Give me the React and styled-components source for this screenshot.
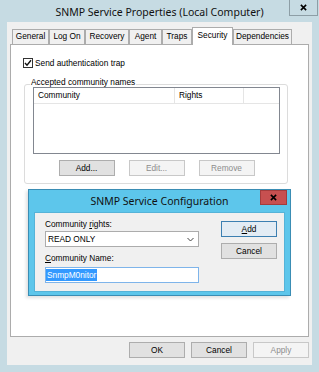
import React from "react";
import styled, { createGlobalStyle } from "styled-components";

const GlobalStyle = createGlobalStyle`
  html, body {
    margin: 0;
    padding: 0;
  }
  body {
    background: #c6dbe3;
    font-family: "Liberation Sans", Arial, sans-serif;
    font-size: 8.3px;
    color: #000;
  }
  * {
    box-sizing: border-box;
  }
`;

const Window = styled.div`
  position: relative;
  width: 319px;
  height: 372px;
  background: #c6dbe3;
  display: flex;
  flex-direction: column;
  overflow: hidden;
`;

const TitleBar = styled.div`
  height: ${(p) => p.h}px;
  flex: none;
  display: grid;
  grid-template-columns: 1fr auto 1fr;
  align-items: start;
`;

const Title = styled.div`
  grid-column: 2;
  font-family: "Noto Sans", "Open Sans", sans-serif;
  font-size: 10.5px;
  line-height: ${(p) => p.lh}px;
  color: #111;
  white-space: nowrap;
`;

const CloseBox = styled.div`
  grid-column: 3;
  justify-self: end;
  width: ${(p) => p.w}px;
  height: ${(p) => p.h}px;
  margin-right: ${(p) => p.mr}px;
  display: flex;
  align-items: center;
  justify-content: center;
  background: ${(p) => (p.red ? "#c75050" : "#c6dbe3")};
  border: 1px solid ${(p) => (p.red ? "#a43c3c" : "#8d9ea6")};
  border-top: ${(p) => (p.red ? "1px solid #a43c3c" : "none")};
`;

const Client = styled.div`
  flex: 1;
  margin: 0 7px 7px;
  padding: 0 3px;
  background: #f0f0f0;
  display: flex;
  flex-direction: column;
`;

const TabStrip = styled.div`
  margin-top: 5px;
  height: 17px;
  padding-left: 2px;
  display: flex;
  align-items: flex-start;
`;

const Tab = styled.div`
  width: ${(p) => p.w}px;
  height: ${(p) => (p.active ? 18 : 15)}px;
  margin-top: ${(p) => (p.active ? 0 : 2)}px;
  border: 1px solid #acacac;
  border-bottom: none;
  background: ${(p) => (p.active ? "#fff" : "#f0f0f0")};
  position: relative;
  z-index: ${(p) => (p.active ? 1 : 0)};
  text-align: center;
  line-height: ${(p) => (p.active ? 15 : 13)}px;
  white-space: nowrap;
`;

const TabPage = styled.div`
  height: 293px;
  flex: none;
  background: #fff;
  border: 1px solid #acacac;
  padding: 13px 20px 0 12px;
`;

const CheckRow = styled.div`
  display: flex;
  align-items: center;
  gap: 2px;
  height: 10px;
`;

const CheckBox = styled.div`
  width: 10px;
  height: 10px;
  border: 1px solid #333;
  background: #fff;
  display: flex;
  align-items: center;
  justify-content: center;
`;

const GroupBox = styled.div`
  position: relative;
  margin: 16px 0 0 1px;
  border: 1px solid #dcdcdc;
  border-radius: 3px;
  padding: 2px 7px 7px 8px;
`;

const GroupLabel = styled.span`
  position: absolute;
  top: -8px;
  left: 5px;
  padding: 0 1px;
  line-height: 10px;
  background: #fff;
`;

const ListView = styled.div`
  height: 67px;
  border: 1px solid #828790;
  background: #fff;
`;

const ListHeader = styled.div`
  display: flex;
  height: 16px;
  border-bottom: 1px solid #e5e5e5;
`;

const HeaderCell = styled.div`
  width: ${(p) => (p.w ? `${p.w}px` : "auto")};
  flex: ${(p) => (p.w ? "none" : 1)};
  border-right: ${(p) => (p.w ? "1px solid #e5e5e5" : "none")};
  padding-left: 4px;
  line-height: 14px;
`;

const ButtonRow = styled.div`
  display: flex;
  justify-content: center;
  gap: 14px;
  margin-top: 6px;
`;

const Button = styled.button`
  width: 56px;
  height: 16px;
  padding: 0;
  margin-top: ${(p) => p.mt || 0}px;
  font-family: "Liberation Sans", Arial, sans-serif;
  font-size: 8.3px;
  line-height: 14px;
  color: ${(p) => (p.disabled ? "#8d8d8d" : "#000")};
  background: ${(p) => (p.disabled ? "#f4f4f4" : p.primary ? "#e3ecf4" : "#e1e1e1")};
  border: 1px solid ${(p) => (p.disabled ? "#c8c8c8" : p.primary ? "#3c7fb1" : "#adadad")};
  border-radius: 0;
`;

const Footer = styled.div`
  display: flex;
  justify-content: flex-end;
  gap: 6px;
  margin-top: 5px;
`;

const Dialog = styled.div`
  position: absolute;
  left: 28px;
  top: 189px;
  width: 263px;
  height: 107px;
  background: #5dc6eb;
  border: 1px solid #3a8db4;
  padding-bottom: 3px;
  display: flex;
  flex-direction: column;
  box-shadow: -2px 2px 3px rgba(0, 0, 0, 0.12);
`;

const DialogClient = styled.div`
  flex: 1;
  margin: 0 5px;
  background: #f0f0f0;
  border: 1px solid #55b3d8;
  padding: 6px 0 0 10px;
  display: grid;
  grid-template-columns: 154px 56px;
  column-gap: 22px;
  align-content: start;
`;

const Column = styled.div`
  display: flex;
  flex-direction: column;
`;

const FieldLabel = styled.div`
  line-height: 10px;
  margin-top: ${(p) => p.mt || 0}px;
  white-space: nowrap;
`;

const Select = styled.div`
  height: 16px;
  margin-top: 2px;
  border: 1px solid #acacac;
  background: #fff;
  display: flex;
  align-items: center;
  justify-content: space-between;
  padding: 0 4px 0 2px;
  line-height: 14px;
`;

const TextInput = styled.div`
  height: 16px;
  margin-top: 4px;
  border: 1px solid #7eb4ea;
  background: #fff;
  padding: 1px 0 0 0;
  display: flex;
`;

const Selected = styled.span`
  background: #3399ff;
  color: #fff;
  height: 12px;
  line-height: 12px;
  padding: 0 1px;
`;

const U = styled.span`
  text-decoration: underline;
`;

const XIcon = ({ size = 7, w = 1.8 }) => (
  <svg width={size} height={size} viewBox="0 0 8 8">
    <path d="M1 1 L7 7 M7 1 L1 7" stroke="#000" strokeWidth={w} />
  </svg>
);

const tabs = [
  { label: "General", w: 37 },
  { label: "Log On", w: 36 },
  { label: "Recovery", w: 44 },
  { label: "Agent", w: 33 },
  { label: "Traps", w: 30 },
  { label: "Security", w: 41, active: true },
  { label: "Dependencies", w: 59 },
];

export default function App() {
  return (
    <>
      <GlobalStyle />
      <Window>
        <TitleBar h={22}>
          <Title lh={24}>SNMP Service Properties (Local Computer)</Title>
          <CloseBox w={29} h={16} mr={1}>
            <XIcon />
          </CloseBox>
        </TitleBar>
        <Client>
          <TabStrip>
            {tabs.map((t) => (
              <Tab key={t.label} w={t.w} active={t.active}>
                {t.label}
              </Tab>
            ))}
          </TabStrip>
          <TabPage>
            <CheckRow>
              <CheckBox>
                <svg width="8" height="8" viewBox="0 0 8 8">
                  <path d="M1 4 L3 6.2 L7 1.2" stroke="#111" strokeWidth="1.4" fill="none" />
                </svg>
              </CheckBox>
              <span>Send authentication trap</span>
            </CheckRow>
            <GroupBox>
              <GroupLabel>Accepted community names</GroupLabel>
              <ListView>
                <ListHeader>
                  <HeaderCell w={141}>Community</HeaderCell>
                  <HeaderCell w={69}>Rights</HeaderCell>
                  <HeaderCell />
                </ListHeader>
              </ListView>
              <ButtonRow>
                <Button>Add...</Button>
                <Button disabled>Edit...</Button>
                <Button disabled>Remove</Button>
              </ButtonRow>
            </GroupBox>
          </TabPage>
          <Footer>
            <Button>OK</Button>
            <Button>Cancel</Button>
            <Button disabled>Apply</Button>
          </Footer>
        </Client>
        <Dialog>
          <TitleBar h={22}>
            <Title lh={22}>SNMP Service Configuration</Title>
            <CloseBox red w={27} h={15} mr={3}>
              <XIcon />
            </CloseBox>
          </TitleBar>
          <DialogClient>
            <Column>
              <FieldLabel>
                Community <U>r</U>ights:
              </FieldLabel>
              <Select>
                <span>READ ONLY</span>
                <svg width="7" height="5" viewBox="0 0 7 5">
                  <path d="M0.5 1 L3.5 4 L6.5 1" stroke="#444" strokeWidth="1" fill="none" />
                </svg>
              </Select>
              <FieldLabel mt={6}>
                <U>C</U>ommunity Name:
              </FieldLabel>
              <TextInput>
                <Selected>SnmpM0nitor</Selected>
              </TextInput>
            </Column>
            <Column>
              <Button primary mt={2}>
                <U>A</U>dd
              </Button>
              <Button mt={6}>Cancel</Button>
            </Column>
          </DialogClient>
        </Dialog>
      </Window>
    </>
  );
}
